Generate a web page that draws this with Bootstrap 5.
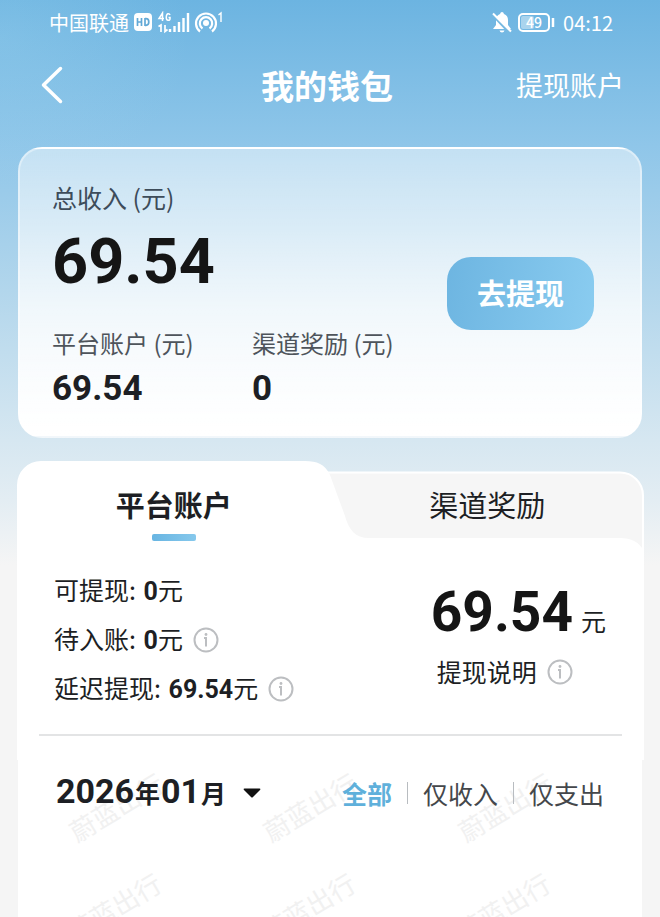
<!DOCTYPE html>
<html lang="zh-CN">
<head>
<meta charset="utf-8">
<meta name="viewport" content="width=device-width, initial-scale=1">
<title>我的钱包</title>
<link href="https://cdn.jsdelivr.net/npm/bootstrap@5.3.0/dist/css/bootstrap.min.css" rel="stylesheet">
<style>
body{font-family:"Noto Sans CJK SC",sans-serif;color:#1d1f24;background:#f5f5f5;overflow-x:hidden}
.wallet{min-height:100vh;background:radial-gradient(ellipse 190px 150px at 0 40px,#a2d6ee44,transparent),linear-gradient(#6cb4e1 0,#8fc6e9 145px,#b2d6ec 290px,#d6e7f1 440px,#e3edf3 500px,#f5f5f5 565px)}
button{font-family:inherit;color:inherit;background:none;border:0;padding:0}
.num{font-family:Roboto,"Noto Sans CJK SC",sans-serif}
.status{height:46px;padding:0 47px 0 49px;font-size:20px;line-height:28px}
.topbar{height:78px;display:grid;grid-template-columns:1fr auto 1fr;padding:0 36px 0 30px}
.topbar button{padding-left:11px}
.topbar h1{font-size:33px;line-height:44px;font-weight:700}
.topbar a{font-size:27px;line-height:40px}
.total-card{margin:23px 18px 0;padding:30px 46px 29px 32px;border:2px solid #ffffff66;border-radius:24px;background:linear-gradient(#ffffff77 0,#ffffff99 80px,#ffffffcc 160px,#fff 285px)}
.cap-lg{font-size:25px;line-height:36px;color:#3d4c5a}
.cap-md{font-size:24px;line-height:32px;color:#4e545b}
.sum{font-size:63px;line-height:72px;font-weight:700;color:#151515;margin:11px 0 29px}
.part{font-size:35px;line-height:36px;font-weight:700;margin-top:12px}
.parts>div:first-child{width:200px}
.cash{width:147px;height:73px;border-radius:24px;font-size:29px;font-weight:700;color:#fff;background:linear-gradient(100deg,#6db5e1,#8accf0)}
.account{margin:23px 16px 0 17px;background:linear-gradient(#fff,#fff) 0 78px/100% 100% no-repeat}
.tabs{height:90px}
.tabs>svg{position:absolute;inset:0;z-index:0}
.tabs button{position:relative;font-size:29px;line-height:44px;padding-top:21px;flex:1}
.tabs .on{font-weight:700}
.tabs .on::after{content:"";width:44px;height:7px;border-radius:2px;margin-top:8px;background:linear-gradient(90deg,#68b5e2,#86c8ec)}
.detail{padding:15px 38px 21px 37px;font-size:25px}
.line{height:49px;display:flex;align-items:center}
.line strong{font-weight:700;margin-left:2px}
.line strong span{font-weight:400}
.tip{width:26px;height:26px;display:inline-flex;margin-left:10px}
.payout{padding-top:14px}
.payout-note{padding-left:6px;height:56px}
.amount{font-size:55px;line-height:64px;font-weight:700;color:#151515}
.unit{font-size:25px;line-height:36px}
.rule{height:2px;margin:0 22px;background:#e3e4e5}
.records{margin:0 18px;min-height:160px;background:#fff;position:relative;overflow:hidden}
.marks{position:absolute;inset:0}
.filters{position:relative;padding:9px 38px 0 38px}
.month{font-size:34px;line-height:44px;font-weight:700}
.month small{font-size:25px;margin:0 1px}
.filters .pick{font-size:25px;line-height:44px;color:#44474b}
.filters .pick.on{color:#5fb0db;font-weight:700}
.bar{width:1px;height:22px;background:#b8bcc0;margin:0 15px}
</style>
<script src="https://cdn.jsdelivr.net/npm/bootstrap@5.3.0/dist/js/bootstrap.bundle.min.js"></script>
</head>
<body>
<svg class="d-none" aria-hidden="true">
  <symbol id="info" viewBox="0 0 26 26"><circle cx="13" cy="13" r="11.500" fill="none" stroke="#bcbec1" stroke-width="2"/><path d="M11 11h2v8.500" fill="none" stroke="#bcbec1" stroke-width="2"/><circle cx="13" cy="7.500" r="1.400" fill="#bcbec1"/></symbol>
</svg>
<main class="wallet d-flex flex-column">
  <div class="status d-flex justify-content-between align-items-center text-white">
    <div class="d-flex align-items-center">
      <span>中国联通</span>
      <svg class="ms-1" width="90" height="24" viewBox="0 0 90 24" role="img" aria-label="HD 4G 信号 热点">
        <rect x="1" y="2" width="18" height="18" rx="4" fill="#fff"/>
        <path d="M4.500 7v8M8.500 7v8M4.500 11h4M12 7v8M12 7.700h1q2.800 0 2.800 3.300t-2.800 3.300h-1" fill="none" stroke="#62a9d6" stroke-width="1.700"/>
        <path d="M29.500 10V2L26 7.500h5M37 4q-.5-1.500-2-1.300T33.300 6t1.700 3.300T37 8V6.500h-1.500" fill="none" stroke="#fff" stroke-width="1.500"/>
        <path d="M25.500 15.500L28 14v7M32 14v6.500l2.500-2" fill="none" stroke="#fff" stroke-width="1.700"/>
        <path d="M37 21v-3M41.500 21v-6M46 21V11M50.500 21V7M55 21V2" stroke="#fff" stroke-width="2.400"/>
        <circle cx="73" cy="12" r="3" fill="#fff"/>
        <path d="M69.500 17.500a6.200 6.200 0 1 1 7 0M67 20.500a10 10 0 1 1 12 0" fill="none" stroke="#fff" stroke-width="2.200"/>
        <path d="M85.500 4L88 2v9" fill="none" stroke="#fff" stroke-width="1.400"/>
      </svg>
    </div>
    <div class="d-flex align-items-center">
      <svg width="72" height="24" viewBox="0 0 72 24" role="img" aria-label="静音 电量 49">
        <path d="M11 1q1.500 0 2 2 4 1.500 4 6v5l3 4H2l3-4v-5q0-4.500 4-6 .5-2 2-2M8.500 19.500h5q-.5 2-2.500 2t-2.500-2" fill="#fff"/>
        <path d="M2 4L19 22" stroke="#76b9e1" stroke-width="3"/><path d="M2 2.500L20 20.500" stroke="#fff" stroke-width="2"/>
        <rect x="28" y="3" width="30" height="17" rx="4" fill="none" stroke="#fff" stroke-width="2"/>
        <rect x="30" y="5" width="13" height="13" rx="2" fill="#fff" opacity=".4"/>
        <path d="M62 7v9" stroke="#fff" stroke-width="2.500"/>
        <text x="43" y="17" text-anchor="middle" font-size="14" font-weight="500" fill="#fff">49</text>
      </svg>
      <span>04:12</span>
    </div>
  </div>
  <header class="topbar align-items-center text-white">
    <button type="button" aria-label="返回" class="d-flex"><svg width="22" height="38" viewBox="0 0 22 38"><path d="M19.500 2.500L2.500 19l17 16.500" fill="none" stroke="#fff" stroke-width="3.500" stroke-linecap="round" stroke-linejoin="round"/></svg></button>
    <h1 class="m-0">我的钱包</h1>
    <a href="#" class="text-white text-decoration-none text-end">提现账户</a>
  </header>

  <section class="total-card d-flex justify-content-between align-items-center">
    <div class="flex-grow-1">
      <div class="cap-lg">总收入 (元)</div>
      <div class="sum num">69.54</div>
      <div class="parts d-flex">
        <div><div class="cap-md">平台账户 (元)</div><div class="part num">69.54</div></div>
        <div class="text-nowrap"><div class="cap-md">渠道奖励 (元)</div><div class="part num">0</div></div>
      </div>
    </div>
    <button type="button" class="cash flex-shrink-0">去提现</button>
  </section>

  <section class="account">
    <div class="tabs d-flex position-relative" role="tablist">
      <svg width="100%" height="90" viewBox="0 0 627 90" preserveAspectRatio="none" aria-hidden="true">
        <path d="M290 11.500H603a23 23 0 0 1 23 23V90H290Z" fill="#f6f6f6" stroke="#fff" stroke-width="2"/>
        <path d="M0 90V24A24 24 0 0 1 24 0H288C300 0 308 3 313 14L328 55C332 69 338 77 352 77H603Q620 77 627 90Z" fill="#fff"/>
      </svg>
      <button type="button" role="tab" aria-selected="true" class="on d-flex flex-column align-items-center">平台账户</button>
      <button type="button" role="tab" aria-selected="false" class="d-flex flex-column align-items-center">渠道奖励</button>
    </div>
    <div class="detail d-flex justify-content-between">
      <div>
        <div class="line"><div>可提现: <strong class="num">0<span>元</span></strong></div></div>
        <div class="line"><div>待入账: <strong class="num">0<span>元</span></strong></div>
          <button type="button" class="tip" aria-label="待入账说明"><svg width="26" height="26"><use href="#info"/></svg></button></div>
        <div class="line"><div>延迟提现: <strong class="num">69.54<span>元</span></strong></div>
          <button type="button" class="tip" aria-label="延迟提现说明"><svg width="26" height="26"><use href="#info"/></svg></button></div>
      </div>
      <div class="payout">
        <div class="d-flex align-items-baseline gap-2"><span class="amount num">69.54</span><span class="unit">元</span></div>
        <div class="payout-note d-flex align-items-center"><span>提现说明</span>
          <button type="button" class="tip" aria-label="提现说明"><svg width="26" height="26"><use href="#info"/></svg></button></div>
      </div>
    </div>
    <div class="rule"></div>
    <div class="pb-4"></div>
  </section>

  <section class="records flex-grow-1">
    <svg class="marks" width="100%" height="100%" aria-hidden="true">
      <g font-size="26" fill="#f1f1f1">
        <text transform="translate(59 83) rotate(-31)">蔚蓝出行</text>
        <text transform="translate(253 83) rotate(-31)">蔚蓝出行</text>
        <text transform="translate(448 83) rotate(-31)">蔚蓝出行</text>
        <text transform="translate(57 183) rotate(-31)">蔚蓝出行</text>
        <text transform="translate(251 183) rotate(-31)">蔚蓝出行</text>
        <text transform="translate(446 183) rotate(-31)">蔚蓝出行</text>
      </g>
    </svg>
    <div class="filters d-flex justify-content-between align-items-center">
      <button type="button" class="month num d-flex align-items-center"><span>2026<small>年</small>01<small>月</small></span>
        <svg class="ms-3" width="18" height="10" viewBox="0 0 18 10" aria-hidden="true"><path d="M1.500.5h15q1.500 0 .5 1.500L10 9Q9 10 8 9L1 2Q0 .5 1.500.5" fill="#111"/></svg></button>
      <div class="d-flex align-items-center">
        <button type="button" class="pick on">全部</button><span class="bar"></span>
        <button type="button" class="pick">仅收入</button><span class="bar"></span>
        <button type="button" class="pick">仅支出</button>
      </div>
    </div>
  </section>
</main>
</body>
</html>
